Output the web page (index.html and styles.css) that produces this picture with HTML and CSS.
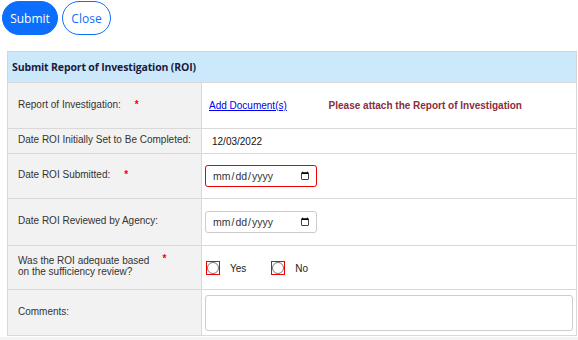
FILE: index.html
```html
<!DOCTYPE html>
<html lang="en">
<head>
    <meta charset="UTF-8">
    <meta name="viewport" content="width=device-width, initial-scale=1.0">
    <title>Submit ROI</title>
    <link rel="stylesheet" href="styles.css">
</head>
<body>
    <div class="actions">
        <button class="btn primary" type="submit">Submit</button>
        <button class="btn outline" type="button">Close</button>
    </div>

    <table class="roi">
        <colgroup>
            <col class="c-lbl">
            <col>
        </colgroup>
        <tr class="head">
            <th colspan="2">Submit Report of Investigation (ROI)</th>
        </tr>
        <tr class="r1">
            <td class="lbl"><span>Report of Investigation:</span><span class="req">*</span></td>
            <td class="val">
                <a href="#" class="doc">Add Document(s)</a>
                <span class="warn">Please attach the Report of Investigation</span>
            </td>
        </tr>
        <tr class="r2">
            <td class="lbl">Date ROI Initially Set to Be Completed:</td>
            <td class="val"><span class="plain">12/03/2022</span></td>
        </tr>
        <tr class="r3">
            <td class="lbl"><span>Date ROI Submitted:</span><span class="req">*</span></td>
            <td class="val"><input type="date" class="date invalid"></td>
        </tr>
        <tr class="r4">
            <td class="lbl">Date ROI Reviewed by Agency:</td>
            <td class="val"><input type="date" class="date"></td>
        </tr>
        <tr class="r5">
            <td class="lbl">
                <div class="twoline">
                    <span>Was the ROI adequate based<br>on the sufficiency review?</span>
                    <span class="req">*</span>
                </div>
            </td>
            <td class="val">
                <div class="radios">
                    <label><input type="radio" name="adequate"> Yes</label>
                    <label><input type="radio" name="adequate"> No</label>
                </div>
            </td>
        </tr>
        <tr class="r6">
            <td class="lbl">Comments:</td>
            <td class="val"><textarea class="comments"></textarea></td>
        </tr>
    </table>
    <div class="foot"></div>
</body>
</html>
```

FILE: styles.css
```css
body{
    margin: 0;
    padding: 1px 2px 0;
    font-family: "Liberation Sans", Arial, sans-serif;
    font-size: 10px;
    color: #333;
    background: #fff;
}
.actions{
    display: flex;
    gap: 4px;
    height: 34px;
}
.btn{
    font-family: "Open Sans", "Noto Sans", sans-serif;
    font-size: 12px;
    border-radius: 17px;
    padding: 0 6px;
    height: 34px;
    cursor: pointer;
}
.primary{
    background: #0d6efd;
    border: 1px solid #0d6efd;
    color: #fff;
    width: 56px;
}
.outline{
    background: #fff;
    border: 1px solid #0d6efd;
    color: #0d6efd;
    width: 49px;
}
.roi{
    margin: 16px 0 0 5px;
    width: 570px;
    table-layout: fixed;
    border-collapse: collapse;
    border: 1px solid #d4d4d4;
}
.c-lbl{
    width: 194px;
}
.roi td{
    border: 1px solid #d9d9d9;
    vertical-align: middle;
}
.head th{
    background: #cce9fc;
    text-align: left;
    font-family: "Open Sans", "Noto Sans", sans-serif;
    font-weight: 700;
    font-size: 10.5px;
    color: #1b1b3c;
    padding: 0 4px;
    height: 30px;
    letter-spacing: -0.15px;
}
.lbl{
    background: #f2f2f2;
    padding: 0 0 3px 10px;
    white-space: nowrap;
}
.val{
    padding: 0 3px 0 4px;
}
.req{
    color: #e00;
    font-weight: 700;
    margin-left: 14px;
}
.r1{ height: 46px; }
.r2{ height: 25px; }
.r3{ height: 45px; }
.r4{ height: 47px; }
.r5{ height: 44px; }
.r6{ height: 46px; }
.doc{
    color: #0000ee;
    margin-left: 3px;
    margin-right: 39px;
}
.warn{
    color: #8b2c3d;
    font-weight: 700;
}
.plain{
    margin-left: 6px;
    color: #111;
}
.date{
    width: 112px;
    height: 22px;
    box-sizing: border-box;
    border: 1px solid #ccc;
    border-radius: 3px;
    font-family: "Liberation Sans", Arial, sans-serif;
    font-size: 10.5px;
    color: #333;
    padding: 0 4px 0 6px;
    display: block;
    margin-left: -1px;
}
.invalid{
    border-color: #e00;
}
.twoline{
    display: flex;
    align-items: flex-start;
    line-height: 11px;
}
.twoline .req{
    margin-left: 13px;
    margin-top: -2px;
}
.radios{
    display: flex;
    gap: 25px;
    padding-top: 1px;
}
.radios label{
    display: flex;
    align-items: center;
    gap: 11px;
    color: #222;
}
.radios input{
    margin: 0 0 0 1px;
    width: 12px;
    height: 12px;
    outline: 1px solid #e00;
    outline-offset: 0;
}
.comments{
    display: block;
    width: 368px;
    height: 36px;
    box-sizing: border-box;
    border: 1px solid #ccc;
    border-radius: 3px;
    resize: none;
    margin-left: -1px;
}
.foot{
    margin-top: 1px;
    height: 10px;
    background: #f2f2f2;
    margin-left: -2px;
    margin-right: -2px;
}
```
